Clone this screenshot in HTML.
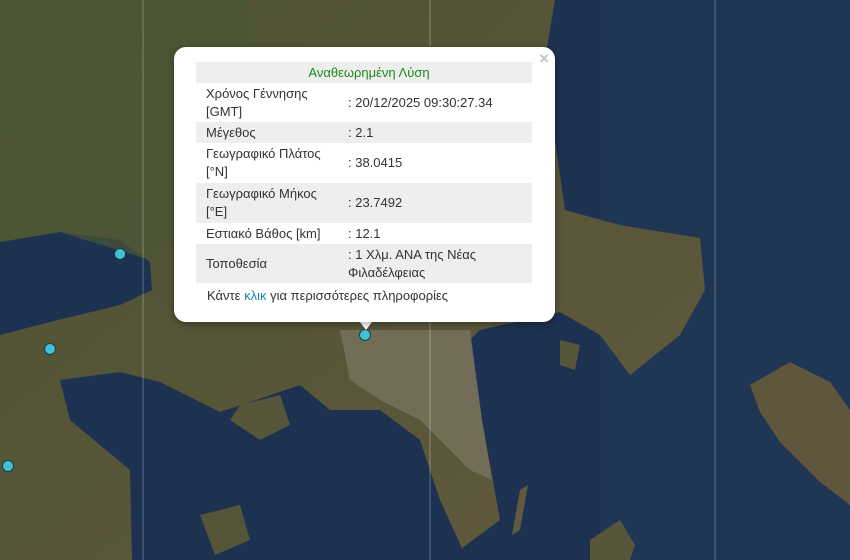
<!DOCTYPE html>
<html><head><meta charset="utf-8"><style>
html,body{margin:0;padding:0;width:850px;height:560px;overflow:hidden;font-family:"Liberation Sans",sans-serif;}
#map{position:absolute;left:0;top:0;width:850px;height:560px;background:#1f3652;}
.pop{position:absolute;left:174px;top:47px;width:381px;height:275px;background:#fff;border-radius:12px;box-shadow:0 2px 8px rgba(0,0,0,.35);}
.tip{position:absolute;left:357px;top:318px;width:0;height:0;border-left:9px solid transparent;border-right:9px solid transparent;border-top:12px solid #fff;}
.x{position:absolute;right:6px;top:2px;color:#c3c3c3;font-size:17px;font-weight:bold;}
table{position:absolute;left:22px;top:15px;width:336px;border-collapse:collapse;font-size:13px;color:#333;}
td{padding:0 0 0 10px;line-height:18px;vertical-align:middle;}
td.a{width:132px;}
tr.g{background:#eeeeee;}
.h td{text-align:center;color:#1a8a1a;height:21px;}
.foot{position:absolute;left:33px;top:241px;font-size:13px;color:#333;}
.foot span{color:#1a86b8;}
.m{position:absolute;width:10px;height:10px;border-radius:50%;background:#3ec3d3;border:1.5px solid #1b3a44;}
</style></head><body>
<div id="map">
<svg width="850" height="560" style="position:absolute;left:0;top:0">
<defs>
<linearGradient id="land" x1="0" y1="0" x2="1" y2="1">
<stop offset="0" stop-color="#4d5333"/><stop offset=".5" stop-color="#575538"/><stop offset="1" stop-color="#62593f"/></linearGradient>
</defs>
<rect width="850" height="560" fill="#1d3250"/>
<rect x="600" y="0" width="250" height="560" fill="#1f3755"/>
<path d="M0,0 L555,0 L545,60 L555,140 L565,210 L620,225 L700,238 L705,290 L680,335 L630,375 L600,335 L560,312 L480,330 L470,340 L482,420 L500,520 L462,548 L440,500 L420,440 L380,410 L330,410 L300,385 L250,402 L220,412 L160,382 L120,372 L60,380 L70,420 L130,470 L132,560 L0,560 L0,335 L50,322 L120,305 L152,290 L150,262 L120,240 L60,232 L0,242 Z" fill="url(#land)"/>
<path d="M0,0 L250,0 L260,80 L220,200 L150,260 L60,232 L0,242 Z" fill="#4a5634" opacity=".7"/>
<path d="M340,330 L470,330 L482,420 L492,480 L470,470 L440,440 L420,420 L380,400 L350,380 Z" fill="#79735f" opacity=".8"/>
<path d="M750,385 L790,362 L830,382 L850,410 L850,505 L820,482 L780,442 L760,412 Z" fill="#5f563d"/>
<path d="M240,405 L280,395 L290,425 L260,440 L230,420Z" fill="#57553a"/>
<path d="M200,515 L240,505 L250,540 L215,555Z" fill="#55553a"/>
<path d="M560,340 L580,345 L575,370 L560,365Z" fill="#57553a"/>
<path d="M590,540 L620,520 L635,545 L630,560 L590,560Z" fill="#57553a"/>
<path d="M520,490 L528,485 L520,530 L512,535Z" fill="#62593f"/>
<g stroke="rgba(255,255,255,.3)" stroke-width="1"><line x1="143" y1="0" x2="143" y2="560"/><line x1="430" y1="0" x2="430" y2="560"/><line x1="715" y1="0" x2="715" y2="560"/></g>
</svg>
<div class="m" style="left:114px;top:248px"></div>
<div class="m" style="left:44px;top:343px"></div>
<div class="m" style="left:2px;top:460px"></div>
<div class="m" style="left:359px;top:329px"></div>
</div>
<div class="tip"></div>
<div class="pop">
<div class="x">×</div>
<table>
<tr class="h g"><td colspan="2">Αναθεωρημένη Λύση</td></tr>
<tr style="height:39px"><td class="a">Χρόνος Γέννησης<br>[GMT]</td><td>: 20/12/2025 09:30:27.34</td></tr>
<tr class="g" style="height:21px"><td class="a">Μέγεθος</td><td>: 2.1</td></tr>
<tr style="height:40px"><td class="a">Γεωγραφικό Πλάτος<br>[°N]</td><td>: 38.0415</td></tr>
<tr class="g" style="height:40px"><td class="a">Γεωγραφικό Μήκος<br>[°E]</td><td>: 23.7492</td></tr>
<tr style="height:21px"><td class="a">Εστιακό Βάθος [km]</td><td>: 12.1</td></tr>
<tr class="g" style="height:39px"><td class="a">Τοποθεσία</td><td>: 1 Χλμ. ΑΝΑ της Νέας<br>Φιλαδέλφειας</td></tr>
</table>
<div class="foot">Κάντε <span>κλικ</span> για περισσότερες πληροφορίες</div>
</div>
</body></html>
